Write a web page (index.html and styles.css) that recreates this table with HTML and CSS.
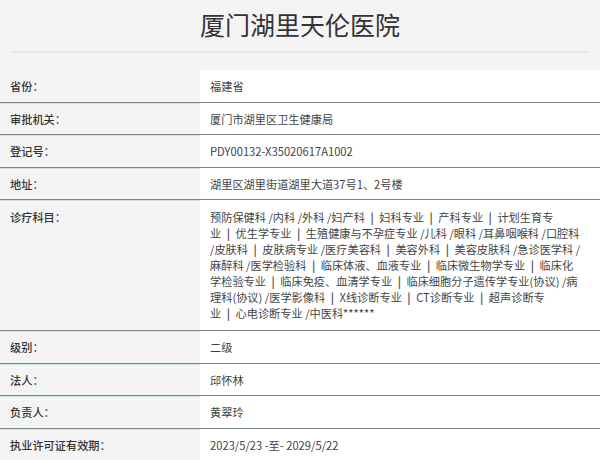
FILE: index.html
```html
<!DOCTYPE html>
<html lang="zh">
<head>
<meta charset="utf-8">
<title>厦门湖里天伦医院</title>
<link rel="stylesheet" href="styles.css">
</head>
<body>
<div class="page">
  <header class="head">
    <h1 class="title">厦门湖里天伦医院</h1>
    <div class="rule"></div>
  </header>
  <div class="table">
    <div class="row"><div class="label">省份：</div><div class="value">福建省</div></div>
    <div class="row"><div class="label">审批机关：</div><div class="value">厦门市湖里区卫生健康局</div></div>
    <div class="row"><div class="label">登记号：</div><div class="value">PDY00132-X35020617A1002</div></div>
    <div class="row"><div class="label">地址：</div><div class="value">湖里区湖里街道湖里大道37号1、2号楼</div></div>
    <div class="row tall"><div class="label">诊疗科目：</div><div class="value multi">
      <span class="ln">预防保健科 /内科 /外科 /妇产科 <b class="bar">|</b> 妇科专业 <b class="bar">|</b> 产科专业 <b class="bar">|</b> 计划生育专</span>
      <span class="ln">业 <b class="bar">|</b> 优生学专业 <b class="bar">|</b> 生殖健康与不孕症专业 /儿科 /眼科 /耳鼻咽喉科 /口腔科</span>
      <span class="ln">/皮肤科 <b class="bar">|</b> 皮肤病专业 /医疗美容科 <b class="bar">|</b> 美容外科 <b class="bar">|</b> 美容皮肤科 /急诊医学科 /</span>
      <span class="ln">麻醉科 /医学检验科 <b class="bar">|</b> 临床体液、血液专业 <b class="bar">|</b> 临床微生物学专业 <b class="bar">|</b> 临床化</span>
      <span class="ln">学检验专业 <b class="bar">|</b> 临床免疫、血清学专业 <b class="bar">|</b> 临床细胞分子遗传学专业(协议) /病</span>
      <span class="ln">理科(协议) /医学影像科 <b class="bar">|</b> X线诊断专业 <b class="bar">|</b> CT诊断专业 <b class="bar">|</b> 超声诊断专</span>
      <span class="ln">业 <b class="bar">|</b> 心电诊断专业 /中医科******</span>
    </div></div>
    <div class="row"><div class="label">级别：</div><div class="value">二级</div></div>
    <div class="row"><div class="label">法人：</div><div class="value">邱怀林</div></div>
    <div class="row"><div class="label">负责人：</div><div class="value">黄翠玲</div></div>
    <div class="row last"><div class="label">执业许可证有效期：</div><div class="value">2023/5/23 -至- 2029/5/22</div></div>
  </div>
</div>
</body>
</html>
```

FILE: styles.css
```css
html, body {
  margin: 0;
  padding: 0;
}
body {
  width: 600px;
  height: 460px;
  overflow: hidden;
  background: #f4f4f4;
  font-family: "Noto Sans CJK SC", "Noto Sans", sans-serif;
  color: #444;
}
.page {
  width: 600px;
}
.head {
  height: 70px;
  display: flex;
  flex-direction: column;
  align-items: center;
}
.title {
  margin: 6px 0 0;
  font-size: 25px;
  line-height: 36px;
  font-weight: 400;
  color: #333;
}
.rule {
  margin-top: 9px;
  width: 580px;
  height: 2px;
  background: #e9e9e9;
}
.table {
  display: flex;
  flex-direction: column;
}
.row {
  display: grid;
  grid-template-columns: 200px 400px;
  border-bottom: 1px solid #768985;
  box-shadow: 0 1px 0 #cfe3de;
}
.row.last {
  border-bottom: none;
  box-shadow: none;
}
.label {
  padding: 8px 10px 7.5px;
  font-size: 11.2px;
  line-height: 16px;
  color: #333;
  font-weight: 500;
}
.value {
  background: #fff;
  padding: 8px 10px 7.5px;
  font-size: 11.2px;
  line-height: 16px;
  color: #444;
}
.tall .label, .tall .value {
  padding-top: 9px;
  padding-bottom: 9px;
}
.multi {
  display: flex;
  flex-direction: column;
}
.ln {
  white-space: pre;
}
.bar {
  font-weight: 700;
  color: #555;
  padding: 0 3px;
}
```
